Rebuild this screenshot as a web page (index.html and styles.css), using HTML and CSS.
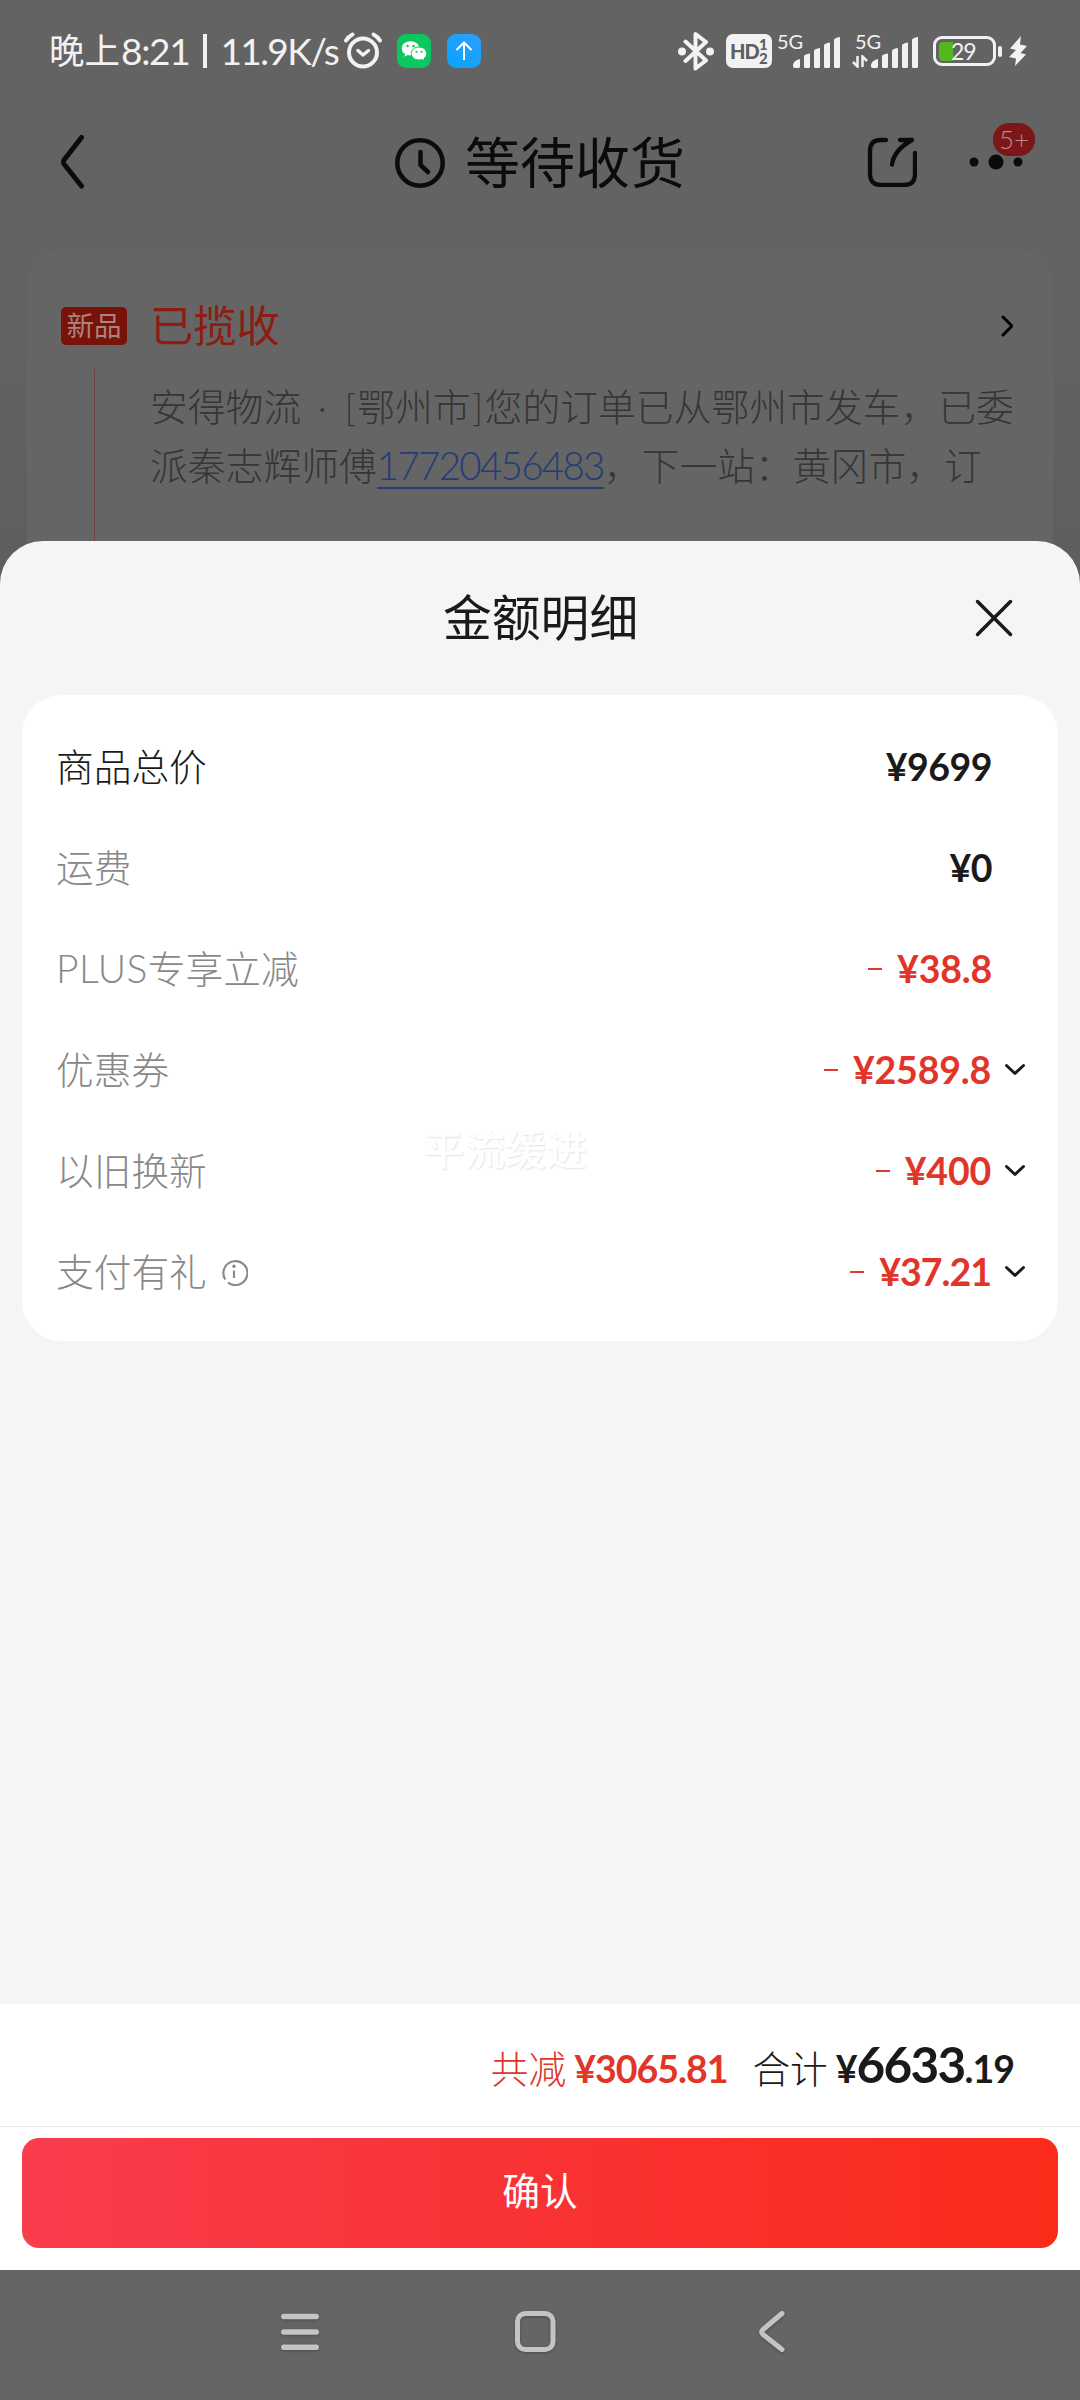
FILE: index.html
```html
<!DOCTYPE html>
<html lang="zh-CN">
<head>
<meta charset="utf-8">
<title>金额明细</title>
<link rel="stylesheet" href="styles.css">
</head>
<body>
<div class="screen">
  <div class="order-page">
    <div class="status-bar">
      <div class="status-text"><span class="clock-label">晚上</span><span class="clock-time">8:21</span><span class="bar-sep"></span><span class="speed">11.9K/s</span></div>
      <svg class="alarm" width="40" height="40" viewBox="0 0 40 40" fill="none" stroke="#f2f2f2" stroke-linecap="round" stroke-linejoin="round">
        <circle cx="20" cy="21.5" r="14" stroke-width="4"/><path d="M3 9.5Q5.5 5.5 9.5 3.5M37 9.5Q34.5 5.5 30.5 3.5" stroke-width="4"/><path d="M15 19.5L20 24L25.500 19.500" stroke-width="3.500"/>
      </svg>
      <svg class="wechat" width="34" height="34" viewBox="0 0 34 34">
        <rect width="34" height="34" rx="9" fill="#0ac75f"/>
        <path d="M13.500 7.200C8.500 7.200 4.800 10.300 4.800 14.400C4.800 16.700 6 18.700 8 20L7.300 22.800L10.600 21.100C11.600 21.400 12.700 21.500 14 21.500C18.700 21.500 22.300 18.500 22.300 14.400C22.300 10.300 18.500 7.200 13.500 7.200Z" fill="#fff"/>
        <path d="M22 13C17.600 13 14.300 15.800 14.300 19.500C14.300 23.200 17.600 26 22 26C23 26 24 25.800 24.900 25.600L27.500 27L26.900 24.600C28.600 23.400 29.600 21.600 29.600 19.500C29.600 15.800 26.400 13 22 13Z" fill="#fff" stroke="#0ac75f" stroke-width="1"/>
        <g fill="#0ac75f"><circle cx="10.600" cy="12" r="1.300"/><circle cx="16.600" cy="12" r="1.300"/><circle cx="19.500" cy="17.800" r="1.100"/><circle cx="24.500" cy="17.800" r="1.100"/></g>
      </svg>
      <svg class="upload" width="34" height="34" viewBox="0 0 34 34">
        <defs><linearGradient id="up" x1="1" y1="0" x2="0.300" y2="1"><stop offset="0" stop-color="#2f9eff"/><stop offset="1" stop-color="#0ba4fb"/></linearGradient></defs>
        <rect width="34" height="34" rx="9" fill="url(#up)"/><path d="M17 26V9M9.500 16L17 8.500L24.500 16" fill="none" stroke="#fff" stroke-width="2"/>
      </svg>
      <div class="status-right">
        <svg width="36" height="40" viewBox="0 0 36 40" fill="none" stroke="#f2f2f2" stroke-width="4" stroke-linejoin="round" stroke-linecap="round"><path d="M7.500 10.500L28 29.500L17.500 37.500V3L28 11L7.500 30"/><circle cx="4" cy="20.500" r="2" /><circle cx="32" cy="20.500" r="2"/></svg>
        <div class="hd"><span class="hd-name">HD</span><span class="hd-sims"><i>1</i><i>2</i></span></div>
        <div class="signal first"><span class="net">5G</span>
          <svg width="48" height="32" viewBox="0 0 48 32" fill="#f2f2f2"><path d="M0 30Q0 24.500 7 23V30.500Q7 32 5.500 32H1.500Q0 32 0 30ZM11 20Q11 18.500 17 17.500V30.500Q17 32 15.500 32H12.500Q11 32 11 30.500ZM21 15Q21 13 27 12V30.500Q27 32 25.500 32H22.500Q21 32 21 30.500ZM31 9.500Q31 7.500 37 6.500V30.500Q37 32 35.500 32H32.500Q31 32 31 30.500ZM41 4Q41 2 47 1V30.500Q47 32 45.500 32H42.500Q41 32 41 30.500Z"/></svg>
        </div>
        <div class="signal second"><span class="net">5G</span>
          <svg class="updown" width="16" height="13" viewBox="0 0 16 13" fill="none" stroke="#f2f2f2" stroke-width="2.500"><path d="M1 7L5.500 11.500V1M15 6L10.500 1.500V12"/></svg>
          <svg width="48" height="32" viewBox="0 0 48 32" fill="#f2f2f2"><path d="M0 30Q0 24.500 7 23V30.500Q7 32 5.500 32H1.500Q0 32 0 30ZM11 20Q11 18.500 17 17.500V30.500Q17 32 15.500 32H12.500Q11 32 11 30.500ZM21 15Q21 13 27 12V30.500Q27 32 25.500 32H22.500Q21 32 21 30.500ZM31 9.500Q31 7.500 37 6.500V30.500Q37 32 35.500 32H32.500Q31 32 31 30.500ZM41 4Q41 2 47 1V30.500Q47 32 45.500 32H42.500Q41 32 41 30.500Z"/></svg>
        </div>
        <div class="battery"><span class="charge"></span><span class="percent">29</span></div>
        <span class="nub"></span>
        <svg class="bolt" width="18" height="30" viewBox="0 0 18 30" fill="#f2f2f2"><path d="M12 0L1 12.500L7 14L0 21L7 22.500L6 30L17 18.500L11.500 17L18 10L11 8.500Z"/></svg>
      </div>
    </div>

    <div class="nav-head">
      <svg class="back" width="26" height="56" viewBox="0 0 26 56" fill="none" stroke="#0b0b0b" stroke-width="5" stroke-linecap="round" stroke-linejoin="round"><path d="M21.500 3.500L4 26Q3 28 4 30L21.500 52"/></svg>
      <div class="page-title">
        <svg width="50" height="50" viewBox="0 0 50 50" fill="none" stroke="#0b0b0b" stroke-width="4.500" stroke-linecap="round" stroke-linejoin="round"><circle cx="25" cy="25" r="22.700"/><path d="M25.500 14V27L33 34"/></svg>
        <span>等待收货</span>
      </div>
      <svg class="share" width="50" height="50" viewBox="0 0 50 50" fill="none" stroke="#0b0b0b" stroke-width="4.300" stroke-linecap="round" stroke-linejoin="round"><path d="M19 3H14Q3 3 3 14V37Q3 48 14 48H37Q48 48 48 37V16M33 3H45Q27 13 25 27.500"/></svg>
      <div class="more">
        <svg width="56" height="16" viewBox="0 0 56 16" fill="#0b0b0b"><circle cx="5" cy="8" r="4.500"/><circle cx="27" cy="8" r="7.500"/><circle cx="49" cy="8" r="4.500"/></svg>
        <span class="badge">5+</span>
      </div>
    </div>

    <div class="logistics">
      <div class="logistics-rail"><span class="new-tag">新品</span><span class="rail-line"></span></div>
      <div class="logistics-main">
        <div class="logistics-title"><span>已揽收</span>
          <svg width="13" height="22" viewBox="0 0 13 22" fill="none" stroke="#000" stroke-width="3" stroke-linecap="round" stroke-linejoin="round"><path d="M2 2L10 10Q11 11 10 12L2 20"/></svg>
        </div>
        <div class="logistics-text">安得物流<span class="dot">·</span><span class="bracket">[</span>鄂州市<span class="bracket">]</span>您的订单已从鄂州市发车，已委<br>派秦志辉师傅<span class="phone">17720456483</span>，下一站：黄冈市，订</div>
      </div>
    </div>
  </div>

  <div class="sheet">
    <div class="sheet-head"><h1>金额明细</h1>
      <svg class="close" width="38" height="38" viewBox="0 0 38 38" stroke="#1a1a1a" stroke-width="3.500" stroke-linecap="round"><path d="M2.500 2.500L35.500 35.500M35.500 2.500L2.500 35.500"/></svg>
    </div>
    <div class="price-card">
      <div class="row"><span class="label dark">商品总价</span><span class="amount">¥9699</span></div>
      <div class="row"><span class="label">运费</span><span class="amount">¥0</span></div>
      <div class="row"><span class="label"><span class="plus">PLUS</span>专享立减</span><span class="minus"></span><span class="amount off">¥38.8</span></div>
      <div class="row"><span class="label">优惠券</span><span class="minus"></span><span class="amount off">¥2589.8</span><svg class="chev" width="22" height="14" viewBox="0 0 22 14"><path d="M2.500 2.500L11 10.500L19.500 2.500"/></svg></div>
      <div class="row"><span class="label">以旧换新</span><span class="minus"></span><span class="amount off">¥400</span><svg class="chev" width="22" height="14" viewBox="0 0 22 14"><path d="M2.500 2.500L11 10.500L19.500 2.500"/></svg></div>
      <div class="row"><span class="label">支付有礼</span>
        <svg class="info" width="28" height="28" viewBox="0 0 28 28" fill="none" stroke="#8a8a8a" stroke-width="2.200"><path d="M5.300 21.500A12 12 0 1 1 8 24.500"/><path d="M14 12.500V20"/><circle cx="14" cy="8.300" r="1.700" fill="#8a8a8a" stroke="none"/></svg>
        <span class="minus"></span><span class="amount off narrow">¥37.21</span><svg class="chev" width="22" height="14" viewBox="0 0 22 14"><path d="M2.500 2.500L11 10.500L19.500 2.500"/></svg></div>
      <span class="watermark">平流缓进</span>
    </div>
    <div class="footer">
      <div class="totals"><span class="t-label red">共减</span><span class="t-amt red">¥3065.81</span><span class="t-label sum">合计</span><span class="t-amt total">¥<b>6633</b>.19</span></div>
      <div class="action"><div class="confirm">确认</div></div>
    </div>
  </div>

  <div class="system-nav">
    <svg width="40" height="44" viewBox="0 0 40 44" stroke="#c4c4c4" stroke-width="5.500" stroke-linecap="round"><path d="M3.800 6.500H36.200M3.800 22H36.200M3.800 37.300H36.200"/></svg>
    <svg width="42" height="44" viewBox="0 0 42 44" fill="none" stroke="#c4c4c4" stroke-width="5"><rect x="3.500" y="3.500" width="35.500" height="36" rx="8"/></svg>
    <svg width="28" height="44" viewBox="0 0 28 44" fill="none" stroke="#c4c4c4" stroke-width="5" stroke-linecap="round" stroke-linejoin="round"><path d="M24 3.500L5 19.500Q2.500 22 5 24.500L24 39.500"/></svg>
  </div>
</div>
</body>
</html>
```
FILE: styles.css
```css
* { box-sizing: border-box; margin: 0; padding: 0; }
body { width: 1080px; background: #656565; font-family: Lato, "Noto Sans CJK SC", sans-serif; }
svg { display: block; flex: none; }
i { font-style: normal; }
.screen { width: 1080px; height: 2400px; overflow: hidden; display: flex; flex-direction: column; }

.order-page { flex: none; height: 600px; margin-bottom: -59px; background: linear-gradient(#636363 0 240px, #5e5e5e); overflow: hidden; }
.status-bar { height: 102px; padding: 0 53px 0 49px; display: flex; align-items: center; color: #f2f2f2; }
.status-text { width: 294px; flex: none; display: flex; align-items: center; font-size: 37px; line-height: 50px; white-space: nowrap; }
.clock-label { width: 72px; font-size: 35.500px; }
.clock-time { width: 82px; letter-spacing: -1.300px; }
.bar-sep { flex: none; width: 3.500px; height: 34px; background: #f2f2f2; margin-right: 14px; }
.speed { letter-spacing: -1.600px; }
.wechat { margin-left: 14px; }
.upload { margin-left: 16px; }
.status-right { margin-left: auto; display: flex; align-items: center; }
.hd { width: 46px; height: 34px; margin-left: 12px; border-radius: 7px; background: #f2f2f2; color: #5f5f5f; display: flex; align-items: center; padding-left: 4px; font-weight: 900; }
.hd-name { width: 29px; font-size: 20px; letter-spacing: -1px; }
.hd-sims { display: flex; flex-direction: column; font-size: 15px; line-height: 14px; }
.signal { display: flex; align-items: flex-end; height: 34px; margin-left: 5px; position: relative; justify-content: flex-end; }
.signal.first { width: 64px; }
.signal.second { width: 66px; margin-left: 12px; gap: 3px; }
.net { position: absolute; left: 0; top: -2px; font-size: 20px; line-height: 18px; }
.second .net { left: 2px; }
.battery { position: relative; width: 63px; height: 30px; margin-left: 14px; border: 3.500px solid #f2f2f2; border-radius: 9px; display: flex; align-items: center; padding-left: 3px; }
.charge { width: 14px; height: 19px; border-radius: 4px 0 0 4px; background: #54b71c; }
.percent { font-size: 23px; line-height: 24px; margin-left: -2px; letter-spacing: -1px; }
.nub { width: 4px; height: 11px; border-radius: 2px; background: #f2f2f2; margin-left: 2px; }
.bolt { margin-left: 7px; }

.nav-head { height: 147px; padding: 0 41px 27px 60px; display: flex; align-items: center; color: #0b0b0b; }
.page-title { margin-left: 309px; display: flex; align-items: center; gap: 20px; font-size: 55px; line-height: 70px; width: 472px; }
.page-title span { margin-top: -1px; }
.page-title svg { margin-top: 2px; }
.more { position: relative; width: 69px; margin-left: 52px; }
.badge { position: absolute; left: 24px; top: -31px; width: 42px; height: 33px; border-radius: 16px; background: #7d1618; color: #b58e8e; font-size: 26px; line-height: 33px; text-align: center; font-weight: 300; }

.logistics { margin: 0 27px; height: 400px; padding: 58px 39px 0 34px; border-radius: 38px; background: #656565; display: flex; }
.logistics-rail { width: 66px; display: flex; flex-direction: column; align-items: center; }
.new-tag { width: 66px; height: 38px; border-radius: 5px; background: #79130a; color: #a98480; font-size: 27.500px; line-height: 37px; text-align: center; white-space: nowrap; }
.rail-line { width: 1px; height: 250px; margin-top: 24px; background: #714040; }
.logistics-main { margin-left: 23px; flex: 1; }
.logistics-title { height: 38px; display: flex; align-items: center; justify-content: space-between; font-size: 43.300px; line-height: 38px; color: #8e1c13; }
.logistics-title span { margin-top: -2px; }
.logistics-text { margin-top: 32px; white-space: nowrap; font-size: 37.800px; line-height: 59px; font-weight: 300; color: #363636; }
.dot { display: inline-block; width: 42px; text-align: center; }
.bracket { display: inline-block; width: 14px; text-align: center; }
.phone { display: inline-block; width: 227px; height: 48px; line-height: 49px; font-size: 38.500px; letter-spacing: -1.700px; color: #243d74; border-bottom: 2px solid #243d74; }

.sheet { flex: none; height: 1729px; border-radius: 43px 43px 0 0; background: #f5f5f5; display: flex; flex-direction: column; position: relative; }
.sheet-head { height: 154px; padding: 0 67px 0 443px; display: flex; align-items: center; justify-content: space-between; color: #1a1a1a; }
h1 { font-size: 48.800px; font-weight: 400; line-height: 60px; margin-top: -2px; }
.price-card { position: relative; margin: 0 22px; height: 646px; padding: 21px 32px 0 34px; border-radius: 40px; background: #fff; }
.row { height: 101.100px; display: flex; align-items: center; }
.label { font-size: 37.700px; line-height: 50px; font-weight: 300; color: #888; white-space: nowrap; }
.dark { color: #1a1a1a; }
.plus { font-size: 39px; letter-spacing: 0.400px; }
.amount { margin-left: auto; margin-right: 34px; font-size: 37.500px; line-height: 50px; font-weight: 700; color: #1a1a1a; letter-spacing: -0.500px; }
.minus { width: 14px; height: 2px; margin-left: auto; margin-right: 15px; background: #e1392d; }
.off { margin-left: 0; color: #e1352a; letter-spacing: -0.200px; }
.narrow { letter-spacing: -1px; }
.row:has(.chev) .amount { margin-right: 13px; }
.chev { width: 22px; margin-right: 0; fill: none; stroke: #1a1a1a; stroke-width: 3; stroke-linecap: round; stroke-linejoin: round; }
.info { margin-left: 13px; }
.watermark { position: absolute; left: 401px; top: 425px; font-size: 41px; line-height: 60px; font-weight: 500; color: #fff; text-shadow: 1px 1px 2px #e2e2e2; }

.footer { margin-top: auto; height: 266px; background: #fff; display: flex; flex-direction: column; }
.totals { height: 123px; padding: 30px 66px 0 0; border-bottom: 1px solid #e6e6e6; display: flex; align-items: baseline; justify-content: flex-end; line-height: 60px; color: #1a1a1a; white-space: nowrap; }
.totals .red { color: #e1352a; }
.t-label { font-size: 37.700px; font-weight: 300; margin-right: 8px; }
.sum { margin-left: 25px; }
.t-amt { font-size: 37.500px; font-weight: 700; letter-spacing: -1px; }
.t-amt b { font-size: 49.500px; font-weight: 700; letter-spacing: -1.700px; }
.action { padding: 11px 22px; }
.confirm { height: 110px; border-radius: 17px; background: linear-gradient(90deg, #f83d4d, #f83439 40%, #fb2b19); color: #fff; font-size: 37.700px; line-height: 106px; text-align: center; }

.system-nav { flex: 1; background: #656565; display: flex; align-items: center; padding: 0 0 6px 280px; }
.system-nav svg { filter: drop-shadow(0 1.500px 1.500px rgba(0,0,0,.25)); }
.system-nav svg:nth-child(2) { margin-left: 194px; }
.system-nav svg:nth-child(3) { margin-left: 202px; }
```
